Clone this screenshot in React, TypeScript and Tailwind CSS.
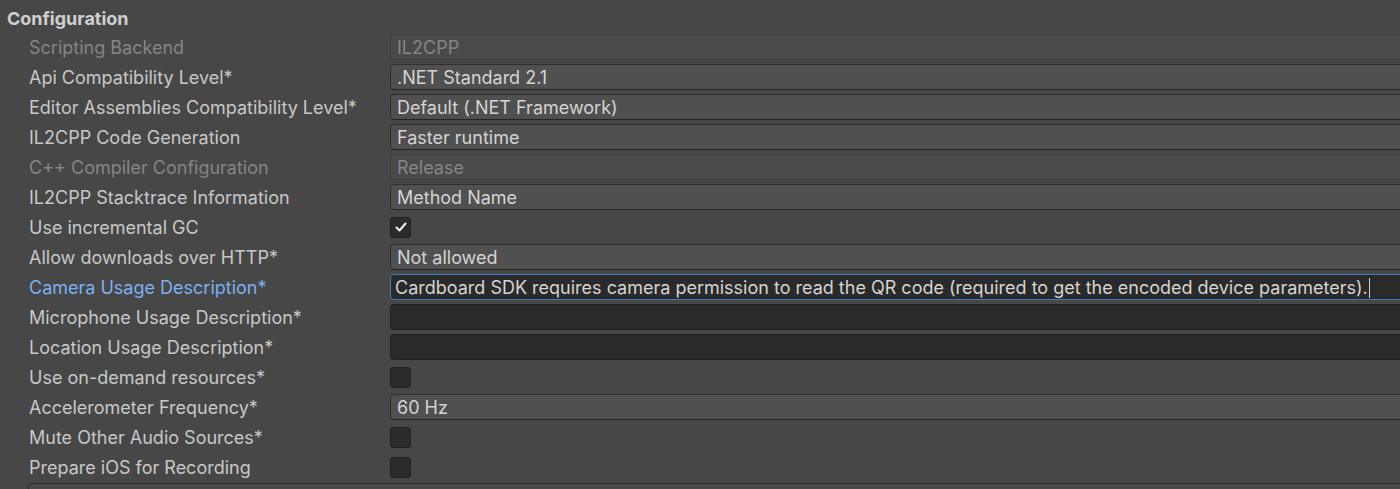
import React from "react";

type Kind = "popup" | "popupDisabled" | "text" | "textFocus" | "check" | "checkOn";

const rows: { label: string; kind: Kind; value?: string; labelClass?: string }[] = [
  { label: "Scripting Backend", kind: "popupDisabled", value: "IL2CPP", labelClass: "text-[#858585]" },
  { label: "Api Compatibility Level*", kind: "popup", value: ".NET Standard 2.1" },
  { label: "Editor Assemblies Compatibility Level*", kind: "popup", value: "Default (.NET Framework)" },
  { label: "IL2CPP Code Generation", kind: "popup", value: "Faster runtime" },
  { label: "C++ Compiler Configuration", kind: "popupDisabled", value: "Release", labelClass: "text-[#858585]" },
  { label: "IL2CPP Stacktrace Information", kind: "popup", value: "Method Name" },
  { label: "Use incremental GC", kind: "checkOn" },
  { label: "Allow downloads over HTTP*", kind: "popup", value: "Not allowed" },
  {
    label: "Camera Usage Description*",
    kind: "textFocus",
    value: "Cardboard SDK requires camera permission to read the QR code (required to get the encoded device parameters).",
    labelClass: "text-[#7bb0f0]",
  },
  { label: "Microphone Usage Description*", kind: "text" },
  { label: "Location Usage Description*", kind: "text" },
  { label: "Use on-demand resources*", kind: "check" },
  { label: "Accelerometer Frequency*", kind: "popup", value: "60 Hz" },
  { label: "Mute Other Audio Sources*", kind: "check" },
  { label: "Prepare iOS for Recording", kind: "check" },
];

function Field({ kind, value }: { kind: Kind; value?: string }) {
  if (kind === "check" || kind === "checkOn") {
    return (
      <div className="w-[21px] h-[21px] rounded-[3px] bg-[#2c2c2c] border border-[#222222] flex items-center justify-center">
        {kind === "checkOn" && (
          <svg width="14" height="14" viewBox="0 0 14 14" fill="none">
            <polyline points="2.5,7.5 5.5,10.5 11.5,3.5" stroke="#f0f0f0" strokeWidth="2" strokeLinecap="round" strokeLinejoin="round" />
          </svg>
        )}
      </div>
    );
  }
  if (kind === "popup") {
    return (
      <div className="flex-1 -mr-[12px] h-[26px] rounded-[4px] bg-[#505050] border border-[#2f2f2f] border-b-[#242424] flex items-center pl-[6px] pt-[1px] text-[#d4d4d4] whitespace-nowrap overflow-hidden">
        {value}
      </div>
    );
  }
  if (kind === "popupDisabled") {
    return (
      <div className="flex-1 -mr-[12px] h-[26px] rounded-[4px] bg-[#4a4a4a] border border-[#3e3e3e] flex items-center pl-[6px] pt-[1px] text-[#858585] whitespace-nowrap overflow-hidden">
        {value}
      </div>
    );
  }
  if (kind === "textFocus") {
    return (
      <div className="flex-1 -mr-[12px] h-[26px] rounded-[4px] bg-[#2a2a2a] border border-[#3a79bb] flex items-center pl-[4px] pt-[1px] text-[#d4d4d4] whitespace-nowrap overflow-hidden">
        <span>{value}</span>
        <span className="inline-block w-px h-[20px] bg-[#d4d4d4] ml-[1px]" />
      </div>
    );
  }
  return (
    <div className="flex-1 -mr-[12px] h-[26px] rounded-[4px] bg-[#2a2a2a] border border-[#222222] border-t-[#1e1e1e]" />
  );
}

export default function App() {
  return (
    <div
      className="w-[1400px] h-[489px] bg-[#474747] overflow-hidden text-[18px] leading-none"
      style={{ fontFamily: "Inter, 'Noto Sans', sans-serif" }}
    >
      <div className="h-[32px] flex items-center pl-[7px] pt-[6px] font-bold text-[#d0d0d0]">Configuration</div>
      {rows.map((r) => (
        <div key={r.label} className="h-[30px] flex items-center">
          <div className={`w-[390px] shrink-0 pl-[29px] pt-[1px] whitespace-nowrap ${r.labelClass ?? "text-[#c8c8c8]"}`}>{r.label}</div>
          <Field kind={r.kind} value={r.value} />
        </div>
      ))}
      <div className="ml-[28px] -mr-[12px] h-[20px] mt-[1px] rounded-[4px] border border-[#2a2a2a] bg-[#4a4a4a]" />
    </div>
  );
}
